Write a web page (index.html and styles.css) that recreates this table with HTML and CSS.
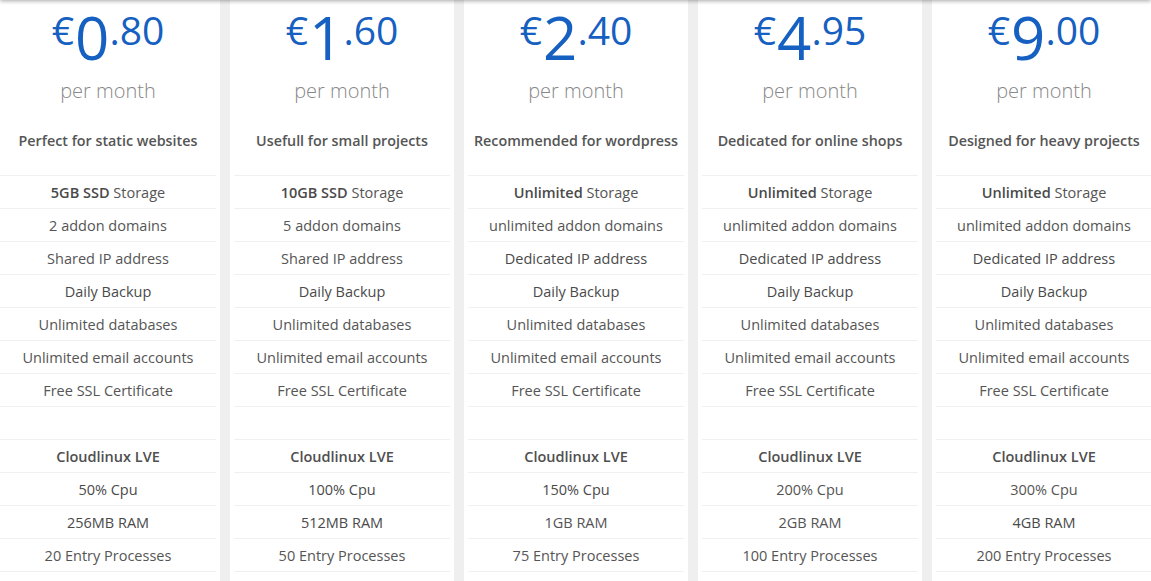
FILE: index.html
```html
<!DOCTYPE html>
<html lang="en">
<head>
<meta charset="utf-8">
<title>Hosting plans</title>
<link rel="stylesheet" href="styles.css">
</head>
<body>
<div class="topshade"></div>
<main class="plans">
  <section class="plan">
    <div class="price"><span class="cur">€</span><span class="int">0</span><span class="dec">.80</span></div>
    <div class="period">per month</div>
    <div class="tagline">Perfect for static websites</div>
    <ul class="features">
      <li><b>5GB SSD</b> Storage</li>
      <li>2 addon domains</li>
      <li>Shared IP address</li>
      <li class="mid">Daily Backup</li>
      <li>Unlimited databases</li>
      <li>Unlimited email accounts</li>
      <li>Free SSL Certificate</li>
      <li>&nbsp;</li>
      <li class="semi">Cloudlinux LVE</li>
      <li class="mid">50% Cpu</li>
      <li class="mid">256MB RAM</li>
      <li>20 Entry Processes</li>
    </ul>
  </section>
  <section class="plan">
    <div class="price"><span class="cur">€</span><span class="int">1</span><span class="dec">.60</span></div>
    <div class="period">per month</div>
    <div class="tagline">Usefull for small projects</div>
    <ul class="features">
      <li><b>10GB SSD</b> Storage</li>
      <li>5 addon domains</li>
      <li>Shared IP address</li>
      <li class="mid">Daily Backup</li>
      <li>Unlimited databases</li>
      <li>Unlimited email accounts</li>
      <li>Free SSL Certificate</li>
      <li>&nbsp;</li>
      <li class="semi">Cloudlinux LVE</li>
      <li class="mid">100% Cpu</li>
      <li class="mid">512MB RAM</li>
      <li>50 Entry Processes</li>
    </ul>
  </section>
  <section class="plan">
    <div class="price"><span class="cur">€</span><span class="int">2</span><span class="dec">.40</span></div>
    <div class="period">per month</div>
    <div class="tagline">Recommended for wordpress</div>
    <ul class="features">
      <li><b>Unlimited</b> Storage</li>
      <li>unlimited addon domains</li>
      <li class="mid">Dedicated IP address</li>
      <li class="mid">Daily Backup</li>
      <li>Unlimited databases</li>
      <li>Unlimited email accounts</li>
      <li>Free SSL Certificate</li>
      <li>&nbsp;</li>
      <li class="semi">Cloudlinux LVE</li>
      <li class="mid">150% Cpu</li>
      <li>1GB RAM</li>
      <li>75 Entry Processes</li>
    </ul>
  </section>
  <section class="plan">
    <div class="price"><span class="cur">€</span><span class="int">4</span><span class="dec">.95</span></div>
    <div class="period">per month</div>
    <div class="tagline">Dedicated for online shops</div>
    <ul class="features">
      <li><b>Unlimited</b> Storage</li>
      <li>unlimited addon domains</li>
      <li class="mid">Dedicated IP address</li>
      <li class="mid">Daily Backup</li>
      <li>Unlimited databases</li>
      <li>Unlimited email accounts</li>
      <li>Free SSL Certificate</li>
      <li>&nbsp;</li>
      <li class="semi">Cloudlinux LVE</li>
      <li>200% Cpu</li>
      <li>2GB RAM</li>
      <li>100 Entry Processes</li>
    </ul>
  </section>
  <section class="plan">
    <div class="price"><span class="cur">€</span><span class="int">9</span><span class="dec">.00</span></div>
    <div class="period">per month</div>
    <div class="tagline">Designed for heavy projects</div>
    <ul class="features">
      <li><b>Unlimited</b> Storage</li>
      <li>unlimited addon domains</li>
      <li class="mid">Dedicated IP address</li>
      <li class="mid">Daily Backup</li>
      <li>Unlimited databases</li>
      <li>Unlimited email accounts</li>
      <li>Free SSL Certificate</li>
      <li>&nbsp;</li>
      <li class="semi">Cloudlinux LVE</li>
      <li>300% Cpu</li>
      <li class="mid">4GB RAM</li>
      <li>200 Entry Processes</li>
    </ul>
  </section>
</main>
</body>
</html>
```

FILE: styles.css
```css
* { box-sizing: border-box; }

html, body {
  margin: 0;
  padding: 0;
  background: #efefef;
  overflow: hidden;
}

body {
  font-family: "Open Sans", "Noto Sans", sans-serif;
  color: #555;
}

.topshade {
  position: fixed;
  top: -10px;
  left: 0;
  right: 0;
  height: 10px;
  box-shadow: 0 1px 4px rgba(0, 0, 0, 0.35);
  z-index: 5;
}

.plans {
  display: grid;
  grid-template-columns: repeat(5, 224px);
  column-gap: 10px;
  width: 1160px;
  margin-left: -4px;
}

.plan {
  background: #fff;
  padding: 1px 4px 0;
  height: 600px;
  text-align: center;
}

.price {
  display: flex;
  justify-content: center;
  align-items: flex-start;
  color: #1560c0;
  font-weight: 400;
  line-height: 1.2;
}

.price .int {
  font-size: 60px;
}

.price .cur,
.price .dec {
  font-size: 39px;
  margin-top: 6px;
}

.price .cur {
  margin-right: 1px;
}

.period {
  margin-top: 6px;
  font-size: 20px;
  line-height: 24px;
  font-weight: 300;
  color: #888;
}

.tagline {
  margin-top: 28px;
  font-size: 14.3px;
  line-height: 20px;
  font-weight: 600;
  color: #555;
}

.features {
  list-style: none;
  margin: 24px 0 0;
  padding: 0;
}

.features li {
  border-top: 1px solid #f0f0f0;
  font-size: 14.5px;
  line-height: 31px;
  padding-top: 1px;
  color: #555;
}

.features li:last-child {
  border-bottom: 1px solid #f0f0f0;
}

.features b {
  font-weight: 600;
  color: #4a4a4a;
}

.features .semi {
  font-weight: 600;
  color: #4f4f4f;
}

.features .mid {
  color: #4a4a4a;
}
```
